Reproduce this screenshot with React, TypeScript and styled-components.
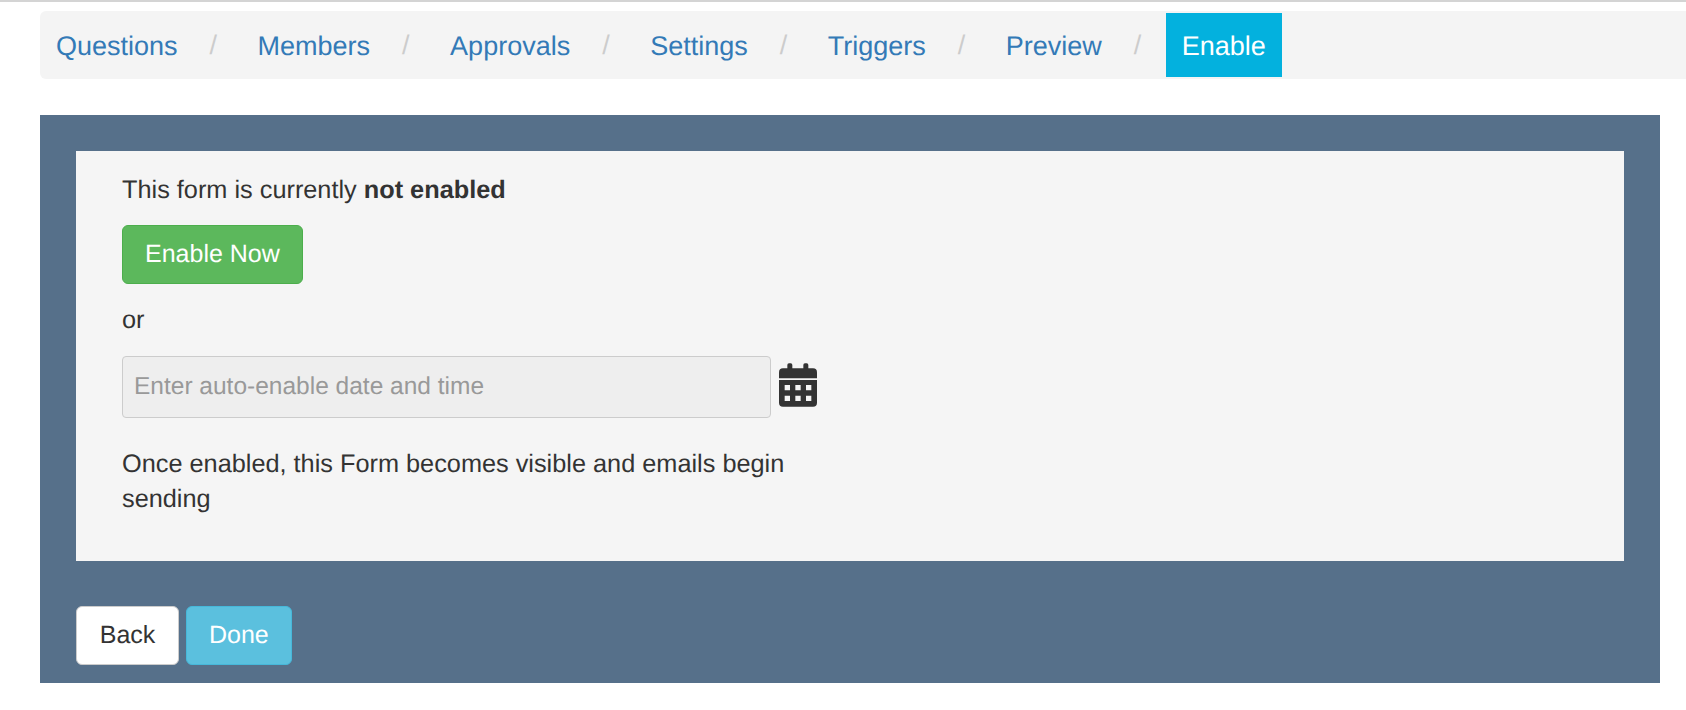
import React from 'react';
import styled, { createGlobalStyle } from 'styled-components';

const GlobalStyle = createGlobalStyle`
  html, body {
    margin: 0;
    padding: 0;
    background: #fff;
    font-family: "Liberation Sans", Arial, sans-serif;
    color: #333;
    text-rendering: geometricPrecision;
  }
  button, input { text-rendering: geometricPrecision; }
  * { box-sizing: border-box; }
`;

const Page = styled.div`
  width: 1686px;
  height: 710px;
  overflow: hidden;
  border-top: 2px solid #d4d4d4;
  padding: 9px 0 0 40px;
`;

const Breadcrumb = styled.ol`
  display: flex;
  align-items: center;
  height: 68px;
  margin: 0 0 36px;
  padding: 2px 0;
  list-style: none;
  background: #f4f4f4;
  border-radius: 6px 0 0 6px;
  font-size: 27px;
`;

const Crumb = styled.li`
  display: flex;
  align-items: center;
  height: 100%;
`;

const CrumbLink = styled.a<{ $active?: boolean }>`
  display: flex;
  align-items: center;
  height: 100%;
  padding: 3px 16px 0;
  color: ${(p) => (p.$active ? '#fff' : '#337ab7')};
  background: ${(p) => (p.$active ? '#03b1de' : 'transparent')};
`;

const Divider = styled.span`
  width: 48px;
  padding-left: 16px;
  color: #ccc;
`;

const Main = styled.main`
  width: 1620px;
  height: 568px;
  background: #56708a;
  padding: 36px 36px 0;
`;

const Panel = styled.section`
  height: 410px;
  background: #f5f5f5;
  padding: 22px 46px 0;
  font-size: 25.3px;
  line-height: 35px;
  color: #333;
`;

const Line = styled.p`
  margin: 0;
`;

const Btn = styled.button<{ $kind: 'success' | 'info' | 'plain' }>`
  min-width: 103px;
  height: 59px;
  padding: 0 22px;
  font-family: "Liberation Sans", Arial, sans-serif;
  font-size: 25px;
  border-radius: 6px;
  border: 1px solid
    ${(p) => (p.$kind === 'success' ? '#4cae4c' : p.$kind === 'info' ? '#46b8da' : '#ccc')};
  background: ${(p) => (p.$kind === 'success' ? '#5cb85c' : p.$kind === 'info' ? '#5bc0de' : '#fff')};
  color: ${(p) => (p.$kind === 'plain' ? '#333' : '#fff')};
`;

const EnableRow = styled.div`
  margin: 17px 0 19px;
`;

const DateRow = styled.div`
  display: flex;
  align-items: center;
  gap: 8px;
  margin: 18px 0 29px;
  color: #333;
`;

const DateInput = styled.input`
  width: 649px;
  height: 62px;
  padding: 0 11px;
  font-family: "Liberation Sans", Arial, sans-serif;
  font-size: 24.5px;
  background: #eee;
  border: 1px solid #ccc;
  border-radius: 4px;
  &::placeholder { color: #999; opacity: 1; }
`;

const CalendarGlyph = styled.svg`
  width: 38px;
  height: 44px;
  margin-bottom: 4px;
  fill: currentColor;
`;

const Note = styled.p`
  width: 680px;
  margin: 0;
`;

const Actions = styled.div`
  display: flex;
  gap: 7px;
  margin-top: 45px;
`;

const steps = ['Questions', 'Members', 'Approvals', 'Settings', 'Triggers', 'Preview'];

const squares = [17, 49, 81]
  .flatMap((x) => [65, 97].map((y) => `M${x} ${y}h16v16h-16z`))
  .join('');

const CalendarIcon = () => (
  <CalendarGlyph viewBox="0 0 114 130" aria-hidden="true">
    <rect x="25" y="0" width="15" height="30" rx="5" />
    <rect x="73" y="0" width="15" height="30" rx="5" />
    <path d="M12 15h90a12 12 0 0 1 12 12v18H0V27a12 12 0 0 1 12-12z" />
    <path
      fillRule="evenodd"
      d={`M0 50h114v68a12 12 0 0 1-12 12H12a12 12 0 0 1-12-12z${squares}`}
    />
  </CalendarGlyph>
);

export default function App() {
  return (
    <>
      <GlobalStyle />
      <Page>
        <Breadcrumb>
          {steps.map((step) => (
            <Crumb key={step}>
              <CrumbLink>{step}</CrumbLink>
              <Divider>/</Divider>
            </Crumb>
          ))}
          <Crumb>
            <CrumbLink $active>Enable</CrumbLink>
          </Crumb>
        </Breadcrumb>
        <Main>
          <Panel>
            <Line>
              This form is currently <b>not enabled</b>
            </Line>
            <EnableRow>
              <Btn $kind="success">Enable Now</Btn>
            </EnableRow>
            <Line>or</Line>
            <DateRow>
              <DateInput disabled placeholder="Enter auto-enable date and time" />
              <CalendarIcon />
            </DateRow>
            <Note>Once enabled, this Form becomes visible and emails begin sending</Note>
          </Panel>
          <Actions>
            <Btn $kind="plain">Back</Btn>
            <Btn $kind="info">Done</Btn>
          </Actions>
        </Main>
      </Page>
    </>
  );
}
